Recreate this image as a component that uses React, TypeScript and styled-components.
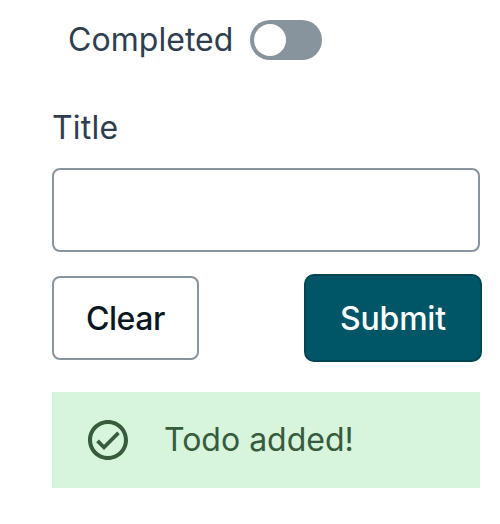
import React, { useState } from "react";
import styled, { createGlobalStyle } from "styled-components";

const GlobalStyle = createGlobalStyle`
  *, *::before, *::after { box-sizing: border-box; }
  body { margin: 0; background: #fff; }
`;

const Form = styled.form`
  width: 500px;
  height: 524px;
  padding: 20px 20px 0 52px;
  font-family: Inter, sans-serif;
  font-size: 32px;
  line-height: 40px;
  color: #2e3e4f;
`;

const ToggleRow = styled.div`
  display: flex;
  align-items: center;
  justify-content: space-between;
  width: 270px;
  height: 40px;
  padding-left: 16px;
`;

const Label = styled.label<{ $spacing?: number }>`
  display: block;
  white-space: nowrap;
  letter-spacing: ${(p) => p.$spacing ?? 0}px;
`;

const Switch = styled.button<{ $on: boolean }>`
  display: flex;
  justify-content: ${(p) => (p.$on ? "flex-end" : "flex-start")};
  width: 72px;
  height: 40px;
  padding: 4px;
  border: 0;
  border-radius: 20px;
  background: ${(p) => (p.$on ? "#005566" : "#87939d")};
`;

const Thumb = styled.span`
  width: 32px;
  height: 32px;
  border-radius: 50%;
  background: #fff;
`;

const Field = styled.div`
  margin-top: 48px;
`;

const Input = styled.input`
  display: block;
  width: 428px;
  height: 84px;
  margin-top: 20px;
  padding: 0 20px;
  border: 2px solid #87939d;
  border-radius: 8px;
  background: #fff;
  font: inherit;
  outline: none;
`;

const Actions = styled.div`
  display: flex;
  align-items: center;
  justify-content: space-between;
  margin: 22px -2px 0 0;
`;

const Button = styled.button<{ $primary?: boolean }>`
  width: ${(p) => (p.$primary ? 178 : 147)}px;
  height: ${(p) => (p.$primary ? 88 : 84)}px;
  padding: 1px 0 0;
  border: 2px solid ${(p) => (p.$primary ? "#004552" : "#87939d")};
  border-radius: ${(p) => (p.$primary ? 10 : 8)}px;
  background: ${(p) => (p.$primary ? "#005566" : "#fff")};
  color: ${(p) => (p.$primary ? "#fff" : "#0b1722")};
  font: 500 32px/40px Inter, sans-serif;
  letter-spacing: ${(p) => (p.$primary ? -0.2 : -0.4)}px;
`;

const Alert = styled.div`
  display: flex;
  align-items: center;
  gap: 32px;
  width: 428px;
  height: 96px;
  margin-top: 30px;
  padding-left: 32px;
  background: #d7f4dc;
  color: #365b3d;
`;

const CheckIcon = () => (
  <svg width="48" height="48" viewBox="0 0 24 24" fill="currentColor">
    <path d="M12 2C6.48 2 2 6.48 2 12s4.48 10 10 10 10-4.48 10-10S17.52 2 12 2zm0 18c-4.41 0-8-3.59-8-8s3.59-8 8-8 8 3.59 8 8-3.59 8-8 8zm4.59-12.2L10 14.35l-2.55-2.6L6.1 13.1 10 17l7.85-7.85z" />
  </svg>
);

export default function App() {
  const [completed, setCompleted] = useState(false);
  const [title, setTitle] = useState("");
  return (
    <>
      <GlobalStyle />
      <Form onSubmit={(e) => e.preventDefault()}>
        <ToggleRow>
          <Label htmlFor="completed" $spacing={0.05}>Completed</Label>
          <Switch
            id="completed"
            type="button"
            role="switch"
            aria-checked={completed}
            $on={completed}
            onClick={() => setCompleted(!completed)}
          >
            <Thumb />
          </Switch>
        </ToggleRow>
        <Field>
          <Label htmlFor="title" $spacing={0.2}>Title</Label>
          <Input id="title" value={title} onChange={(e) => setTitle(e.target.value)} />
        </Field>
        <Actions>
          <Button type="button" onClick={() => setTitle("")}>Clear</Button>
          <Button type="submit" $primary>Submit</Button>
        </Actions>
        <Alert role="status">
          <CheckIcon />
          <span>Todo added!</span>
        </Alert>
      </Form>
    </>
  );
}
